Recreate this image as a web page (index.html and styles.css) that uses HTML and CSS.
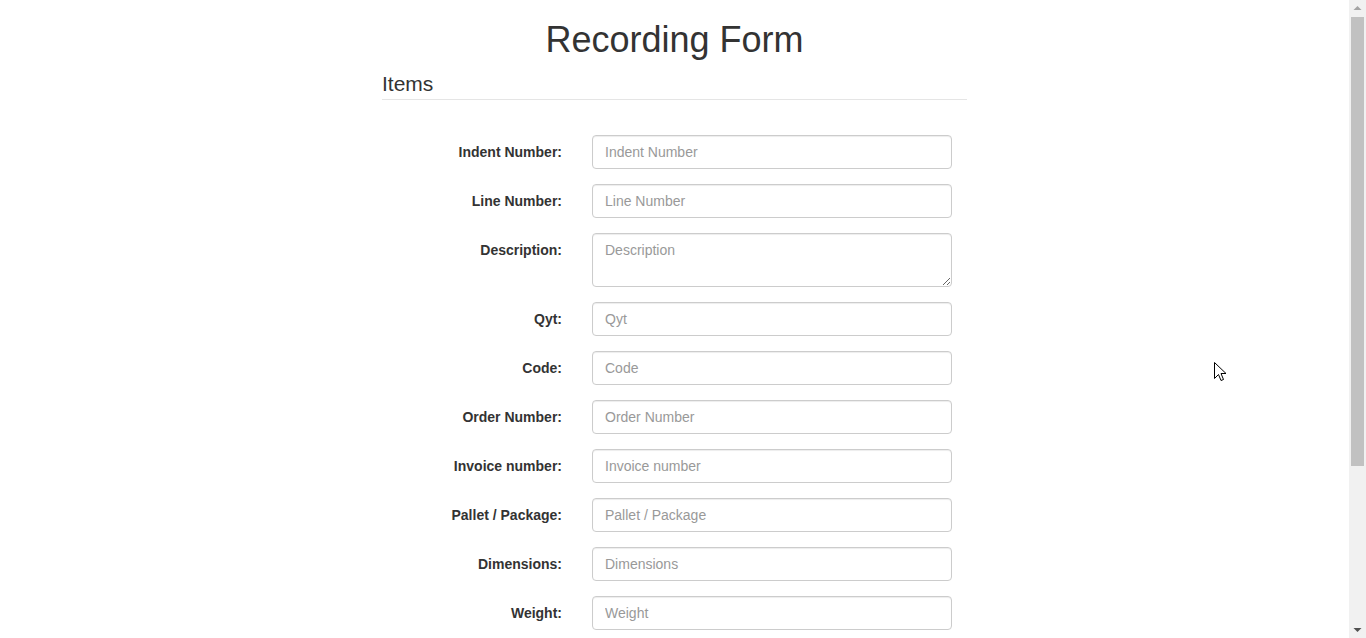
FILE: index.html
```html
<!DOCTYPE html>
<html lang="en">
<head>
<meta charset="utf-8">
<title>Recording Form</title>
<link rel="stylesheet" href="styles.css">
</head>
<body>
<div class="viewport">
  <div class="page">
    <h1 class="title">Recording Form</h1>
    <form class="form">
      <div class="legend">Items</div>
      <div class="fields">
        <div class="row"><label class="lbl" for="f1">Indent Number:</label><div class="ctl"><input id="f1" class="input" placeholder="Indent Number"></div></div>
        <div class="row"><label class="lbl" for="f2">Line Number:</label><div class="ctl"><input id="f2" class="input" placeholder="Line Number"></div></div>
        <div class="row"><label class="lbl" for="f3">Description:</label><div class="ctl"><textarea id="f3" class="input area" rows="2" placeholder="Description"></textarea></div></div>
        <div class="row"><label class="lbl" for="f4">Qyt:</label><div class="ctl"><input id="f4" class="input" placeholder="Qyt"></div></div>
        <div class="row"><label class="lbl" for="f5">Code:</label><div class="ctl"><input id="f5" class="input" placeholder="Code"></div></div>
        <div class="row"><label class="lbl" for="f6">Order Number:</label><div class="ctl"><input id="f6" class="input" placeholder="Order Number"></div></div>
        <div class="row"><label class="lbl" for="f7">Invoice number:</label><div class="ctl"><input id="f7" class="input" placeholder="Invoice number"></div></div>
        <div class="row"><label class="lbl" for="f8">Pallet / Package:</label><div class="ctl"><input id="f8" class="input" placeholder="Pallet / Package"></div></div>
        <div class="row"><label class="lbl" for="f9">Dimensions:</label><div class="ctl"><input id="f9" class="input" placeholder="Dimensions"></div></div>
        <div class="row"><label class="lbl" for="f10">Weight:</label><div class="ctl"><input id="f10" class="input" placeholder="Weight"></div></div>
      </div>
    </form>
  </div>
</div>
<div class="scrollbar" aria-hidden="true">
  <div class="sb-btn">
    <svg width="17" height="17" viewBox="0 0 17 17"><path d="M4.5 10 L8.5 6 L12.5 10 Z" fill="#a3a3a3"/></svg>
  </div>
  <div class="sb-track"><div class="sb-thumb"></div></div>
  <div class="sb-btn">
    <svg width="17" height="17" viewBox="0 0 17 17"><path d="M4.5 7 L8.5 11 L12.5 7 Z" fill="#505050"/></svg>
  </div>
</div>
<svg class="cursor" width="13" height="21" viewBox="0 0 13 21" aria-hidden="true">
  <path d="M0.5 0.5 L0.5 16.5 L4.5 12.5 L7 18.5 L9.5 17.5 L7 11.5 L12 11.5 Z" fill="#fff" stroke="#000" stroke-width="1"/>
</svg>
</body>
</html>
```

FILE: styles.css
```css
html {
  background: #fff;
}

body {
  margin: 0;
  height: 100vh;
  overflow: hidden;
  display: flex;
  font-family: "Liberation Sans", Arial, sans-serif;
  font-size: 14px;
  line-height: 1.42857143;
  color: #333;
}

.viewport {
  flex: 1;
  min-width: 0;
  overflow: hidden;
}

.page {
  width: 585px;
  margin: 0 auto;
}

.title {
  margin: 20px 0 10px;
  font-size: 36px;
  font-weight: 500;
  line-height: 1.1;
  text-align: center;
}

.form {
  margin: 0;
}

.legend {
  font-size: 21px;
  line-height: 28px;
  padding-bottom: 1px;
  color: #333;
  border-bottom: 1px solid #e5e5e5;
  margin-bottom: 35px;
}

.fields {
  display: flex;
  flex-direction: column;
  gap: 15px;
}

.row {
  display: flex;
}

.lbl {
  width: 195px;
  box-sizing: border-box;
  padding: 7px 15px 0;
  text-align: right;
  font-weight: bold;
}

.ctl {
  width: 390px;
  box-sizing: border-box;
  padding: 0 15px;
}

.input {
  display: block;
  width: 100%;
  height: 34px;
  box-sizing: border-box;
  padding: 6px 12px;
  font-family: "Liberation Sans", Arial, sans-serif;
  font-size: 14px;
  line-height: 1.42857143;
  color: #555;
  background: #fff;
  border: 1px solid #ccc;
  border-radius: 4px;
  box-shadow: inset 0 1px 1px rgba(0, 0, 0, 0.075);
  margin: 0;
}

.input::placeholder {
  color: #999;
}

.area {
  height: 54px;
  resize: vertical;
}

.scrollbar {
  width: 17px;
  flex: none;
  display: flex;
  flex-direction: column;
  background: #f1f1f1;
}

.sb-btn {
  height: 17px;
  flex: none;
}

.sb-btn svg {
  display: block;
}

.sb-track {
  flex: 1;
  padding: 0 2px;
}

.sb-thumb {
  height: 449px;
  background: #c1c1c1;
}

.cursor {
  position: absolute;
  left: 1214px;
  top: 362px;
}
```
